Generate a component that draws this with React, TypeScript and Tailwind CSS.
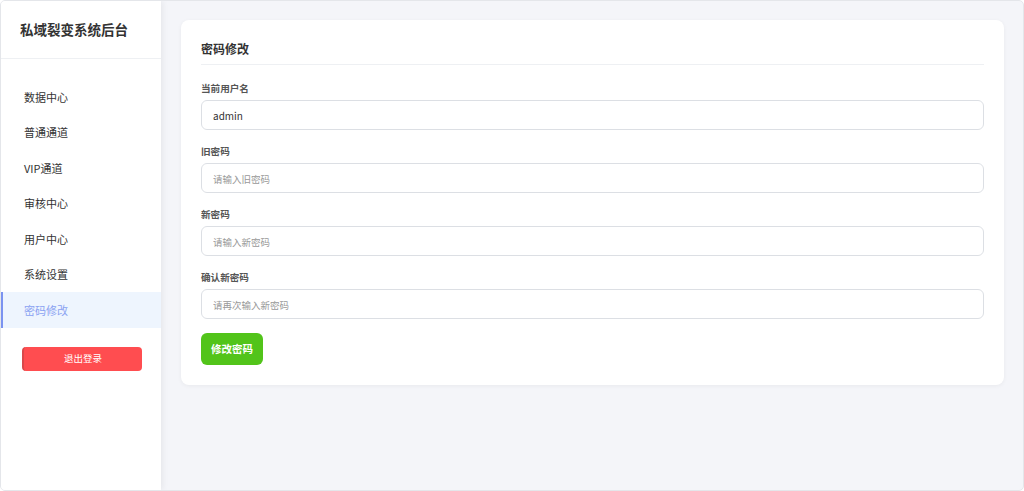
import React from "react";

const menu = ["数据中心", "普通通道", "VIP通道", "审核中心", "用户中心", "系统设置", "密码修改"];

const fields = [
  { label: "当前用户名", value: "admin", placeholder: "" },
  { label: "旧密码", value: "", placeholder: "请输入旧密码" },
  { label: "新密码", value: "", placeholder: "请输入新密码" },
  { label: "确认新密码", value: "", placeholder: "请再次输入新密码" },
];

export default function App() {
  const font = { fontFamily: '"Noto Sans CJK SC", "Noto Sans", sans-serif' };
  return (
    <div
      className="flex h-[491px] w-[1024px] overflow-hidden rounded-[5px] border border-[#e4e6ea] bg-[#f4f5f9]"
      style={font}
    >
      {/* sidebar */}
      <aside className="relative z-10 flex w-[160px] shrink-0 flex-col bg-white shadow-[2px_0_6px_rgba(0,0,0,0.06)]">
        <div className="flex h-[58px] items-center border-b border-[#eef0f3] pl-[19px] text-[13.5px] font-bold text-[#333]">
          私域裂变系统后台
        </div>
        <nav className="mt-[20px] flex flex-col">
          {menu.map((m) => {
            const active = m === "密码修改";
            return (
              <div
                key={m}
                className={
                  active
                    ? "flex h-[35.5px] items-center border-l-2 border-[#7b93f0] bg-[#eef5fe] pl-[21px] text-[11px] text-[#8aa2f2]"
                    : "flex h-[35.5px] items-center border-l-2 border-transparent pl-[21px] text-[11px] text-[#333]"
                }
              >
                {m}
              </div>
            );
          })}
        </nav>
        <div className="mt-[19px] pl-[21px]">
          <button className="flex h-[24px] w-[120px] items-center justify-center rounded-[4px] border-l-2 border-[#d9484a] bg-[#ff4d50] text-[9.5px] text-white">
            退出登录
          </button>
        </div>
      </aside>

      {/* main */}
      <main className="flex-1 pl-[20px] pr-[19px] pt-[19px]">
        <div className="rounded-[8px] bg-white px-[20px] pb-[20px] pt-[20px] shadow-[0_1px_4px_rgba(0,0,0,0.05)]">
          <div className="border-b border-[#eef0f3] pb-[6px] text-[12px] font-bold leading-[18px] text-[#333]">
            密码修改
          </div>
          <div className="mt-[16px] flex flex-col">
            {fields.map((f) => (
              <div key={f.label} className="mb-[14px] flex flex-col">
                <label className="mb-[5px] text-[9.6px] font-bold leading-[14px] text-[#555]">{f.label}</label>
                <input
                  readOnly
                  value={f.value}
                  placeholder={f.placeholder}
                  className="h-[30px] rounded-[6px] border border-[#dcdfe4] bg-white px-[11px] text-[10px] text-[#333] placeholder:text-[9.5px] placeholder:text-[#999] outline-none"
                  style={font}
                />
              </div>
            ))}
          </div>
          <button className="flex h-[32px] w-[62px] items-center justify-center rounded-[6px] bg-[#52c41a] text-[10.5px] font-bold text-white">
            修改密码
          </button>
        </div>
      </main>
    </div>
  );
}
